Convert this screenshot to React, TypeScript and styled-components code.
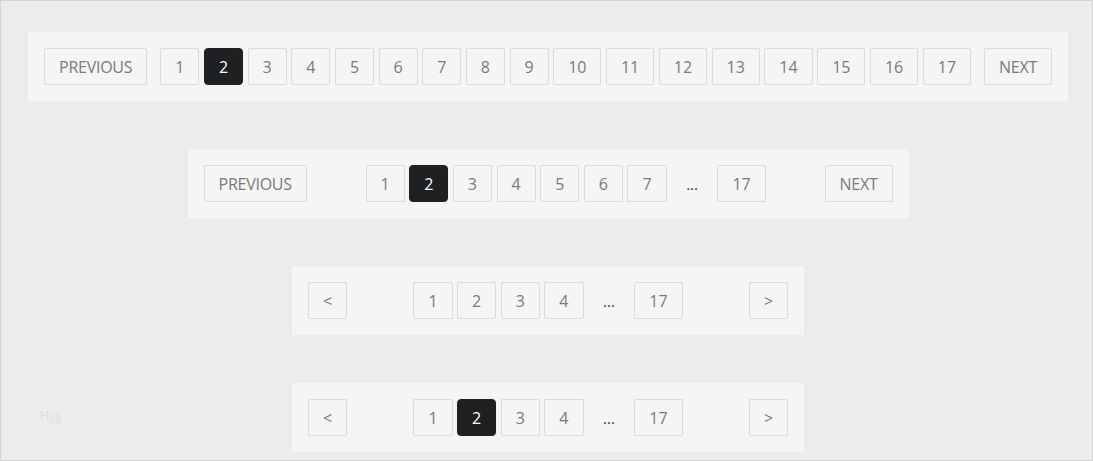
import React from "react";
import styled, { createGlobalStyle } from "styled-components";

const Global = createGlobalStyle`
  html, body { margin: 0; padding: 0; background: #ececec; }
  * { box-sizing: border-box; }
`;

const Page = styled.div`
  position: relative;
  width: 1093px;
  height: 461px;
  border: 1px solid #d4d4d4;
  background: #ececec;
  overflow: hidden;
  display: flex;
  flex-direction: column;
  align-items: center;
  gap: 48px;
  padding: 31px 0 0 3px;
  font-family: "Open Sans", "Noto Sans", sans-serif;
`;

const Panel = styled.nav<{ $w: number }>`
  width: ${(p) => p.$w}px;
  height: 69px;
  background: #f5f5f5;
  padding: 16px;
  display: flex;
  align-items: center;
  justify-content: space-between;
`;

const Group = styled.div`
  display: flex;
  align-items: center;
  gap: 4.5px;
`;

const PageButton = styled.button<{ $active?: boolean }>`
  height: 37px;
  padding: 0 14px;
  border: 1px solid ${(p) => (p.$active ? "#1e2022" : "#dcdcdc")};
  border-radius: ${(p) => (p.$active ? "4px" : "2px")};
  background: ${(p) => (p.$active ? "#1e2022" : "#f5f5f5")};
  color: ${(p) => (p.$active ? "#ffffff" : "#7a7a7a")};
  box-shadow: 0 0 1px rgba(0, 0, 0, 0.06);
  font-family: "Open Sans", "Noto Sans", sans-serif;
  font-size: 16px;
  line-height: 1;
  display: flex;
  align-items: center;
  justify-content: center;
  cursor: pointer;
`;

const NavButton = styled(PageButton)`
  text-transform: uppercase;
  letter-spacing: -0.25px;
`;

const Ellipsis = styled.span`
  height: 37px;
  padding: 0 15px;
  display: flex;
  align-items: center;
  color: #333333;
  font-size: 15px;
`;

const Watermark = styled.span`
  position: absolute;
  left: 39px;
  top: 406px;
  font-size: 12px;
  color: #dedede;
  font-family: "Open Sans", sans-serif;
`;

type Item = number | "...";

function Pager({
  width,
  prev,
  next,
  items,
  active,
}: {
  width: number;
  prev: string;
  next: string;
  items: Item[];
  active?: number;
}) {
  return (
    <Panel $w={width}>
      <NavButton>{prev}</NavButton>
      <Group>
        {items.map((it, i) =>
          it === "..." ? (
            <Ellipsis key={i}>...</Ellipsis>
          ) : (
            <PageButton key={i} $active={it === active}>
              {it}
            </PageButton>
          )
        )}
      </Group>
      <NavButton>{next}</NavButton>
    </Panel>
  );
}

export default function App() {
  const all: Item[] = Array.from({ length: 17 }, (_, i) => i + 1);
  return (
    <>
      <Global />
      <Page>
        <Pager width={1040} prev="Previous" next="Next" items={all} active={2} />
        <Pager width={721} prev="Previous" next="Next" items={[1, 2, 3, 4, 5, 6, 7, "...", 17]} active={2} />
        <Pager width={512} prev="<" next=">" items={[1, 2, 3, 4, "...", 17]} />
        <Pager width={512} prev="<" next=">" items={[1, 2, 3, 4, "...", 17]} active={2} />
        <Watermark>Hgg</Watermark>
      </Page>
    </>
  );
}
